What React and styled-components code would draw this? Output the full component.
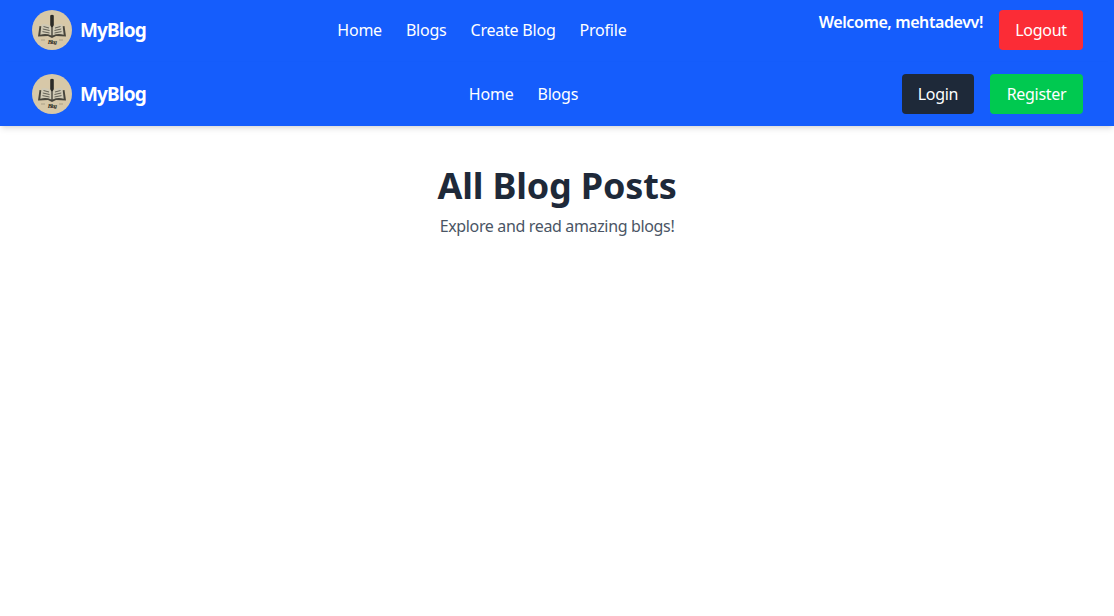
import React from 'react';
import styled, { createGlobalStyle } from 'styled-components';

const GlobalStyle = createGlobalStyle`
    * { box-sizing: border-box; }
    html, body { margin: 0; background: #fff; }
    body {
        font-family: "Noto Sans", "Open Sans", sans-serif;
        font-size: 16px;
        line-height: 24px;
    }
`;

const Nav = styled.nav`
    display: flex;
    align-items: center;
    justify-content: space-between;
    height: ${(p) => p.$height}px;
    padding: ${(p) => p.$pad};
    background: #155dfc;
    color: #fff;
    position: relative;
    box-shadow: ${(p) => (p.$shadow ? '0 4px 6px -1px rgba(0,0,0,.1), 0 2px 4px -2px rgba(0,0,0,.1)' : 'none')};
`;

const Brand = styled.div`
    display: flex;
    align-items: center;
    gap: 8px;
    width: 113px;
    white-space: nowrap;
    font-size: 19px;
    line-height: 28px;
    font-weight: 700;
    letter-spacing: -0.85px;
`;

const LogoMark = styled.svg`
    flex: none;
    width: 40px;
    height: 40px;
`;

const Links = styled.div`
    display: flex;
    gap: 24px;
`;

const NavLink = styled.a`
    color: #fff;
    letter-spacing: -0.22px;
`;

const Actions = styled.div`
    display: flex;
    gap: 16px;
    align-items: ${(p) => (p.$top ? 'flex-start' : 'center')};
`;

const Welcome = styled.span`
    font-weight: 600;
    letter-spacing: -0.4px;
`;

const Button = styled.button`
    height: 40px;
    width: ${(p) => p.$width}px;
    border: 0;
    border-radius: 4px;
    padding: 0;
    color: #fff;
    background: ${(p) => p.$bg};
    font: inherit;
    letter-spacing: -0.3px;
`;

const Main = styled.main`
    padding-top: 40px;
    text-align: center;
`;

const Title = styled.h1`
    margin: 0;
    font-size: 36px;
    line-height: 40px;
    font-weight: 700;
    color: #1e2939;
    letter-spacing: -0.18px;
`;

const Sub = styled.p`
    margin: 8px 0 0;
    color: #4a5565;
    letter-spacing: -0.35px;
`;

function Logo() {
    return (
        <LogoMark viewBox="0 0 40 40">
            <circle cx="20" cy="20" r="20" fill="#d7c8a8" />
            <path d="M18.2 5.5 Q20 4 21.8 5.5 L21.8 15 L20.6 18.5 L19.4 18.5 L18.2 15 Z" fill="#2b2b27" />
            <path d="M7.5 16 L20 18 L32.5 16 L34 26.5 L24 26 L20 28 L16 26 L6 26.5 Z" fill="#47453c" />
            <path d="M9.5 14.5 Q15 13 19.3 17 L19.3 25.5 Q14 23 8.3 24.8 Z" fill="#cfc9b5" />
            <path d="M30.5 14.5 Q25 13 20.7 17 L20.7 25.5 Q26 23 31.7 24.8 Z" fill="#cfc9b5" />
            <path d="M11.5 16.5 L17 18 M10.8 19 L17.5 20.5 M10.5 21.6 L17.5 23 M28.5 16.5 L23 18 M29.2 19 L22.5 20.5 M29.5 21.6 L22.5 23" stroke="#55534a" strokeWidth=".9" />
            <path d="M9 30 L13 30 M27 30 L31 30" stroke="#8d8670" strokeWidth=".6" />
            <text x="20" y="33.5" textAnchor="middle" fontSize="6" fontWeight="700" fontStyle="italic" fontFamily="Liberation Serif, serif" fill="#2a2a26">Blog</text>
        </LogoMark>
    );
}

export default function App() {
    return (
        <>
            <GlobalStyle />
            <Nav $height={62} $pad="0 31px 2px 32px">
                <Brand><Logo />MyBlog</Brand>
                <Links>
                    <NavLink>Home</NavLink>
                    <NavLink>Blogs</NavLink>
                    <NavLink>Create Blog</NavLink>
                    <NavLink>Profile</NavLink>
                </Links>
                <Actions $top>
                    <Welcome>Welcome, mehtadevv!</Welcome>
                    <Button $width={84} $bg="#fb2c36">Logout</Button>
                </Actions>
            </Nav>
            <Nav $height={64} $pad="0 31px 0 32px" $shadow>
                <Brand><Logo />MyBlog</Brand>
                <Links>
                    <NavLink>Home</NavLink>
                    <NavLink>Blogs</NavLink>
                </Links>
                <Actions>
                    <Button $width={72} $bg="#1e2939">Login</Button>
                    <Button $width={93} $bg="#00c950">Register</Button>
                </Actions>
            </Nav>
            <Main>
                <Title>All Blog Posts</Title>
                <Sub>Explore and read amazing blogs!</Sub>
            </Main>
        </>
    );
}
